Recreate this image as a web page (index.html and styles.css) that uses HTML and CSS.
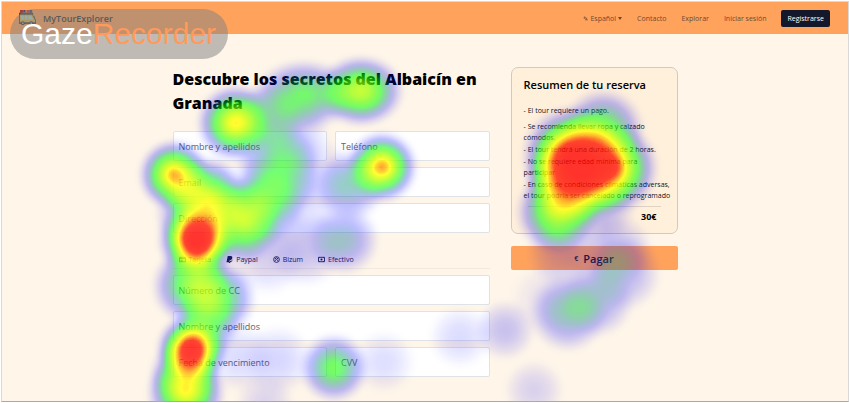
FILE: index.html
```html
<!DOCTYPE html>
<html lang="es">
<head>
<meta charset="utf-8">
<title>MyTourExplorer</title>
<link rel="stylesheet" href="styles.css">
</head>
<body>
<div class="page">
  <header class="topbar">
    <a class="brand" href="#">
      <svg class="brand-icon" viewBox="0 0 20 17" aria-hidden="true">
        <rect x="2" y="0" width="4" height="3" fill="#a33b46"/><rect x="6" y="0" width="2" height="3" fill="#4b4a68"/><rect x="9" y="0" width="3" height="3" fill="#b1464b"/><rect x="12" y="0" width="3" height="3" fill="#4b4a68"/>
        <path d="M1 3h15v3h1l2 5v4H1z" fill="#4f4b46"/>
        <path d="M2 5h13l3 6v2H2z" fill="#dcb64c"/>
        <path d="M3 6h3v4H3zM7 6h3v4H7zM11 6h3l2 4h-5z" fill="#b4d6d2"/>
        <circle cx="5" cy="14" r="2" fill="#3b3a3c"/><circle cx="14" cy="14" r="2" fill="#3b3a3c"/>
        <circle cx="5" cy="14" r="1" fill="#aaa"/><circle cx="14" cy="14" r="1" fill="#aaa"/>
      </svg>
      <span>MyTourExplorer</span>
    </a>
    <nav class="nav">
      <button class="lang" type="button"><svg viewBox="0 0 8 8" aria-hidden="true"><path d="M1 2h3M2.500 1v1M1.500 4.500L4 2M2 3l2 1.500M4 7l1.500-4L7 7M4.500 6h2"/></svg>Español<i class="caret"></i></button>
      <a href="#">Contacto</a>
      <a href="#">Explorar</a>
      <a href="#">Iniciar sesión</a>
      <a class="signup" href="#">Registrarse</a>
    </nav>
  </header>

  <main class="content">
    <section>
      <h1>Descubre los secretos del Albaicín en Granada</h1>
      <form class="fields">
        <div class="pair">
          <input type="text" placeholder="Nombre y apellidos" aria-label="Nombre y apellidos">
          <input type="tel" placeholder="Teléfono" aria-label="Teléfono">
        </div>
        <input type="email" placeholder="Email" aria-label="Email">
        <input type="text" placeholder="Dirección" aria-label="Dirección">
        <div class="methods">
          <button type="button" class="active"><svg viewBox="0 0 8 8" aria-hidden="true"><path d="M.5 1.500h7v5h-7zM.5 3h7M2 5h2" class="line"/></svg>Tarjeta</button>
          <button type="button"><svg viewBox="0 0 8 8" aria-hidden="true"><path d="M2 0h4q2 1 1 3-1 2-3 2l-.5 2H.5z"/><path d="M4 6q3 0 3.500-2.500L7 6 5 7l-.5 1H3z"/></svg>Paypal</button>
          <button type="button"><svg viewBox="0 0 8 8" aria-hidden="true"><circle cx="4" cy="4" r="3.300" class="line"/><path d="M2 3.500L4 2l2 1.500M2 5.500L4 4l2 1.500" class="line"/></svg>Bizum</button>
          <button type="button"><svg viewBox="0 0 8 8" aria-hidden="true"><path d="M.5 1.500h7v5h-7zM.5 3l1.500-1.500M6 1.500L7.500 3M.5 5L2 6.500M6 6.500L7.500 5" class="line"/><circle cx="4" cy="4" r="1.200"/></svg>Efectivo</button>
        </div>
        <input type="text" placeholder="Número de CC" aria-label="Número de CC">
        <input type="text" placeholder="Nombre y apellidos" aria-label="Titular de la tarjeta">
        <div class="pair">
          <input type="text" placeholder="Fecha de vencimiento" aria-label="Fecha de vencimiento">
          <input type="text" placeholder="CVV" aria-label="CVV">
        </div>
      </form>
    </section>

    <aside>
      <div class="card">
        <h2>Resumen de tu reserva</h2>
        <p class="lead">- El tour requiere un pago.</p>
        <p>- Se recomienda llevar ropa y calzado cómodos.</p>
        <p>- El tour tendrá una duración de 2 horas.</p>
        <p>- No se requiere edad mínima para participar</p>
        <p class="wide">- En caso de condiciones climáticas adversas, el tour podría ser cancelado o reprogramado</p>
        <hr>
        <strong class="total">30€</strong>
      </div>
      <button class="pay" type="button"><span class="euro">€</span>Pagar</button>
    </aside>
  </main>

  <svg class="heatmap" viewBox="0 0 849 403" preserveAspectRatio="xMidYMin slice" aria-hidden="true">
    <defs>
      <radialGradient id="spot">
        <stop offset="0" stop-color="#fff" stop-opacity="1"/>
        <stop offset=".2" stop-color="#fff" stop-opacity=".93"/>
        <stop offset=".4" stop-color="#fff" stop-opacity=".76"/>
        <stop offset=".6" stop-color="#fff" stop-opacity=".5"/>
        <stop offset=".8" stop-color="#fff" stop-opacity=".19"/>
        <stop offset=".9" stop-color="#fff" stop-opacity=".06"/>
        <stop offset="1" stop-color="#fff" stop-opacity="0"/>
      </radialGradient>
      <!-- intensity to colour: blue, green, yellow, red, with opacity rising alongside -->
      <filter id="ramp" filterUnits="userSpaceOnUse" x="0" y="0" width="849" height="403" color-interpolation-filters="sRGB">
        <feGaussianBlur in="SourceGraphic" stdDeviation="2" result="soft"/>
        <feComponentTransfer in="soft" result="colour">
          <feFuncR type="table" tableValues="0 0 0 0 0 0 0 0 0 0 0 0 .167 .333 .5 .667 .833 1 1 1 1"/>
          <feFuncG type="table" tableValues="0 0 0 0 0 0 .167 .333 .5 .667 .833 1 1 1 1 1 1 1 .667 .1 0"/>
          <feFuncB type="table" tableValues="1 1 1 1 1 1 .833 .667 .5 .333 .167 0 0 0 0 0 0 0 0 0 0"/>
        </feComponentTransfer>
        <feColorMatrix in="soft" type="matrix" values="0 0 0 0 0  0 0 0 0 0  0 0 0 0 0  1 0 0 0 0" result="mask"/>
        <feComponentTransfer in="mask" result="alpha">
          <feFuncA type="table" tableValues="0 .2 .4 .6 .8 .8"/>
        </feComponentTransfer>
        <feComposite in="colour" in2="alpha" operator="in"/>
      </filter>
    </defs>
    <g filter="url(#ramp)" fill="url(#spot)">
      <rect x="-20" y="-20" width="889" height="443" fill="#000"/>
      <ellipse cx="361" cy="91" rx="46" ry="38" opacity=".78"/>
      <ellipse cx="304" cy="95" rx="54" ry="38" opacity=".56"/>
      <circle cx="268" cy="118" r="38" opacity=".34"/>
      <circle cx="235" cy="123" r="41" opacity=".87"/>
      <ellipse cx="294" cy="138" rx="38" ry="42" opacity=".2"/>
      <ellipse cx="278" cy="172" rx="46" ry="56" opacity=".54"/>
      <circle cx="266" cy="206" r="42" opacity=".42"/>
      <circle cx="382" cy="167" r="38" opacity=".93"/>
      <circle cx="350" cy="186" r="38" opacity=".4"/>
      <circle cx="318" cy="176" r="42" opacity=".14"/>
      <circle cx="310" cy="210" r="36" opacity=".08"/>
      <circle cx="174" cy="175" r="38" opacity=".92"/>
      <circle cx="206" cy="198" r="44" opacity=".78"/>
      <circle cx="192" cy="214" r="40" opacity=".42"/>
      <circle cx="240" cy="221" r="46" opacity=".76"/>
      <circle cx="197" cy="240" r="42" opacity=".98"/>
      <circle cx="197" cy="240" r="32" opacity=".92"/>
      <circle cx="344" cy="240" r="38" opacity=".38"/>
      <circle cx="305" cy="248" r="42" opacity=".22"/>
      <circle cx="268" cy="258" r="40" opacity=".16"/>
      <circle cx="198" cy="268" r="36" opacity=".2"/>
      <circle cx="191" cy="286" r="42" opacity=".62"/>
      <circle cx="217" cy="298" r="42" opacity=".62"/>
      <circle cx="206" cy="326" r="36" opacity=".4"/>
      <circle cx="192" cy="349" r="38" opacity=".97"/>
      <circle cx="190" cy="352" r="30" opacity=".72"/>
      <circle cx="185" cy="374" r="38" opacity=".5"/>
      <circle cx="186" cy="392" r="42" opacity=".8"/>
      <circle cx="240" cy="358" r="38" opacity=".14"/>
      <circle cx="278" cy="360" r="38" opacity=".16"/>
      <circle cx="334" cy="368" r="37" opacity=".59"/>
      <circle cx="384" cy="362" r="34" opacity=".13"/>
      <circle cx="265" cy="403" r="32" opacity=".14"/>
      <circle cx="460" cy="337" r="34" opacity=".14"/>
      <circle cx="505" cy="330" r="33" opacity=".22"/>
      <circle cx="534" cy="390" r="33" opacity=".15"/>
      <circle cx="603" cy="130" r="44" opacity=".6"/>
      <circle cx="572" cy="156" r="53" opacity=".98"/>
      <circle cx="580" cy="170" r="56" opacity=".97"/>
      <circle cx="612" cy="168" r="49" opacity=".95"/>
      <circle cx="568" cy="184" r="46" opacity=".6"/>
      <circle cx="557" cy="212" r="44" opacity=".74"/>
      <circle cx="598" cy="208" r="40" opacity=".26"/>
      <circle cx="562" cy="252" r="38" opacity=".2"/>
      <circle cx="595" cy="262" r="36" opacity=".1"/>
      <circle cx="618" cy="250" r="38" opacity=".22"/>
      <circle cx="624" cy="274" r="40" opacity=".26"/>
      <circle cx="597" cy="300" r="40" opacity=".32"/>
      <circle cx="568" cy="313" r="42" opacity=".4"/>
      <circle cx="545" cy="298" r="38" opacity=".08"/>
    </g>
  </svg>

  <div class="watermark"><span>Gaze</span><span class="accent">Recorder</span></div>
</div>
</body>
</html>
```
FILE: styles.css
```css
* {
  box-sizing: border-box;
}

body {
  margin: 0;
  padding: 1px 0 0 1px;
  background: #fff;
  font-family: "Open Sans", "Noto Sans", sans-serif;
  font-size: 7px;
  color: #111;
}

.page {
  position: relative;
  min-height: calc(100vh - 2px);
  overflow: hidden;
  background: #fff6e9;
  border: 1px solid #d9d9d9;
  border-bottom-color: #a9a9a9;
}

input,
button {
  font: inherit;
  color: inherit;
}

button {
  padding: 0;
  border: 0;
  background: none;
}

a {
  color: inherit;
  text-decoration: none;
}

.topbar {
  display: flex;
  align-items: center;
  justify-content: space-between;
  height: 32px;
  padding: 0 18px 0 16px;
  background: #ffa35c;
}

.brand {
  display: flex;
  align-items: center;
  gap: 6px;
  font-size: 9px;
  font-weight: 600;
  color: #333;
}

.brand-icon {
  width: 19px;
  height: 16px;
}

.nav {
  display: flex;
  align-items: center;
  gap: 15px;
  color: #6b4a33;
}

.lang {
  display: flex;
  align-items: center;
  gap: 2px;
}

.lang svg {
  width: 5px;
  height: 5px;
  fill: none;
  stroke: currentColor;
}

.caret {
  border: 2px solid transparent;
  border-top: 3px solid currentColor;
  border-bottom: 0;
}

.signup {
  padding: 0 6px;
  line-height: 17px;
  border-radius: 2px;
  background: #14182b;
  color: #fff;
}

.content {
  display: grid;
  grid-template-columns: 19fr 10fr;
  align-items: start;
  gap: 21px;
  max-width: 505px;
  margin: 0 auto;
  padding-top: 33px;
}

h1 {
  margin: 0 0 16px;
  font-size: 16px;
  line-height: 24px;
  font-weight: 800;
  color: #000;
}

.fields {
  display: grid;
  gap: 6px;
}

.pair {
  display: grid;
  grid-template-columns: 1fr 1fr;
  gap: 8px;
}

.fields input {
  width: 100%;
  min-width: 0;
  height: 30px;
  padding: 0 5px;
  border: 1px solid #dfe3e6;
  border-radius: 2px;
  background: #fff;
  font-size: 9px;
}

.fields input::placeholder {
  color: #666;
  opacity: 1;
}

.methods {
  display: flex;
  gap: 15px;
  height: 30px;
  padding: 12px 6px 0;
  border-bottom: 1px solid #f3eadd;
}

.methods button {
  display: flex;
  align-items: center;
  gap: 3px;
  color: #1c2038;
}

.methods .active {
  color: #555;
}

.methods svg {
  width: 7px;
  height: 7px;
  fill: currentColor;
}

.methods .line {
  fill: none;
  stroke: currentColor;
}

.card {
  padding: 9px 12px 11px;
  border: 1px solid #d2cabd;
  border-radius: 7px;
  background: #fff0dc;
}

.card h2 {
  margin: 0 0 12px;
  font-size: 11px;
  line-height: 16px;
  font-weight: 600;
  color: #000;
}

.card p {
  margin: 0 0 1px;
  line-height: 11px;
}

.card .lead {
  margin-bottom: 5px;
}

.card .wide {
  margin-right: -10px;
}

hr {
  margin: 5px 4px;
  border: 0;
  border-top: 1px solid #ddd2c3;
}

.total {
  display: block;
  padding-right: 8px;
  font-size: 9px;
  line-height: 10px;
  text-align: right;
  color: #000;
}

.pay {
  display: flex;
  align-items: center;
  justify-content: center;
  gap: 5px;
  width: 100%;
  height: 24px;
  margin-top: 12px;
  border-radius: 2px;
  background: #ffa35c;
  font-size: 11px;
  font-weight: 600;
  color: #222;
}

.euro {
  font-size: 7px;
}

.heatmap {
  position: absolute;
  top: -2px;
  left: -2px;
  width: calc(100% + 3px);
  height: calc(100% + 4px);
  pointer-events: none;
}

.watermark {
  position: absolute;
  top: 7px;
  left: 8px;
  padding: 0 12px 0 11px;
  border-radius: 25px;
  background: rgba(128, 128, 128, 0.5);
  font-family: "Liberation Sans", Arial, sans-serif;
  font-size: 30px;
  line-height: 50px;
  color: #fff;
}

.accent {
  color: #ff9a5c;
}
```
